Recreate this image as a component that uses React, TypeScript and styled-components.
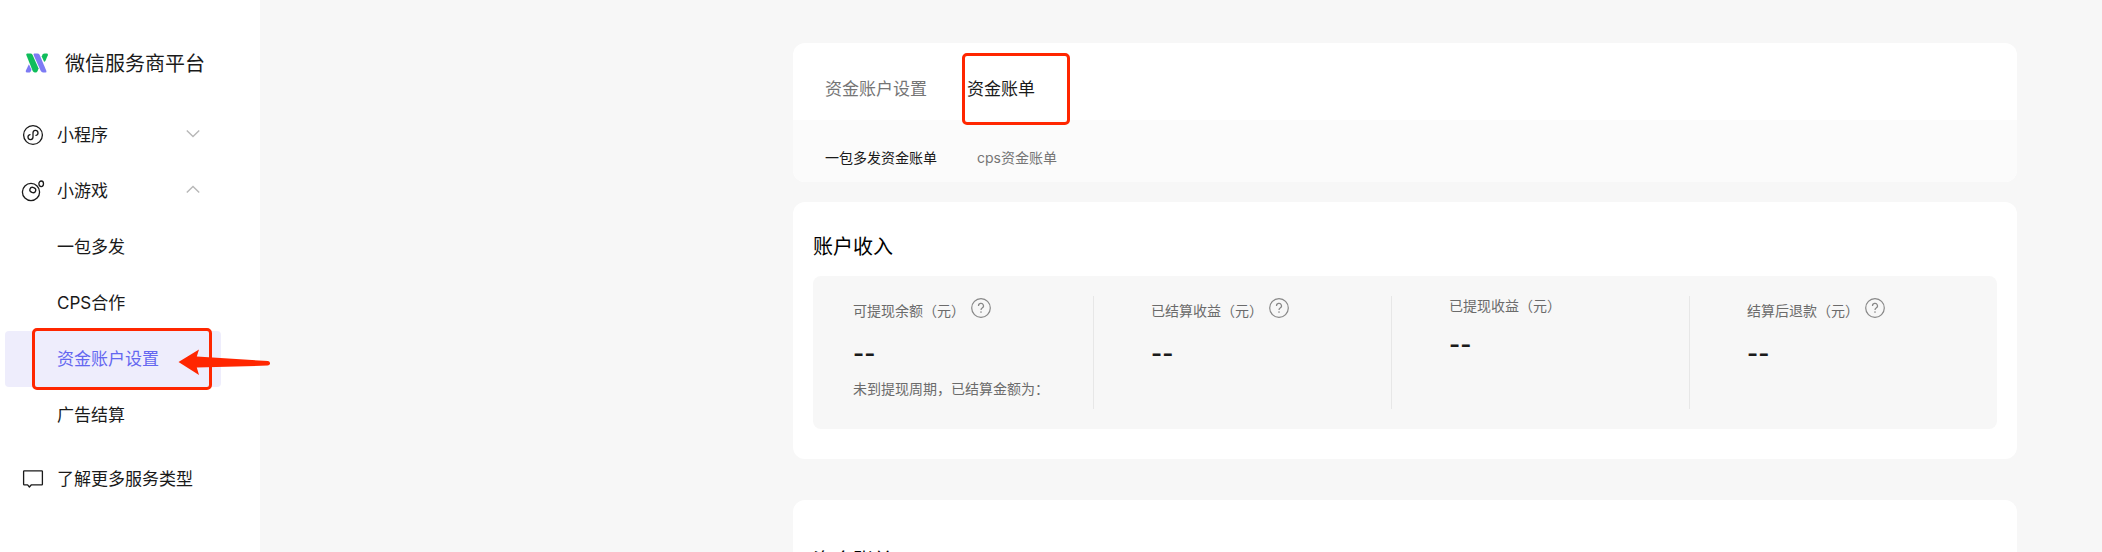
import React from "react";
import styled, { createGlobalStyle, css } from "styled-components";

const Global = createGlobalStyle`
  *, *::before, *::after { box-sizing: border-box; }
  body {
    margin: 0;
    background: #f7f7f7;
    color: #1a1a1a;
    font-family: Inter, "Noto Sans CJK SC", sans-serif;
  }
  h1, h2, p, ul, dl, dd, dt { margin: 0; padding: 0; }
  ul { list-style: none; }
  button { font: inherit; color: inherit; background: none; border: 0; padding: 0; cursor: pointer; }
  a { color: inherit; text-decoration: none; }
  svg { display: block; flex: none; }
`;

const Page = styled.div`
  display: flex;
  height: 100vh;
  overflow: hidden;
`;

const Sidebar = styled.aside`
  flex: none;
  width: 260px;
  padding: 48px 39px 0 5px;
  background: #fff;
`;

const Brand = styled.a`
  display: flex;
  align-items: center;
  gap: 16px;
  height: 30px;
  padding-left: 20px;
  margin-bottom: 29px;
`;

const BrandName = styled.h1`
  padding-top: 1px;
  font-size: 20px;
  line-height: 30px;
  font-weight: 400;
  white-space: nowrap;
`;

const rowStyle = css`
  display: flex;
  align-items: center;
  width: 100%;
  height: 56px;
  border-radius: 4px;
  font-size: 17px;
  line-height: 24px;
  text-align: left;
  white-space: nowrap;
`;

const MenuButton = styled.button`
  ${rowStyle}
  padding: 0 21px 0 16px;
`;

const MenuLabel = styled.span`
  flex: 1;
  margin-left: 12px;
`;

const SubItem = styled.li`
  position: relative;
`;

const SubLink = styled.a<{ $active?: boolean }>`
  ${rowStyle}
  padding-left: 52px;
  color: ${(p) => (p.$active ? "#6467f0" : "inherit")};
  background: ${(p) => (p.$active ? "#eeedfc" : "transparent")};
`;

const MoreLink = styled.a`
  ${rowStyle}
  margin-top: 8px;
  padding: 0 0 0 16px;
`;

const Marker = styled.span`
  position: absolute;
  border: 3px solid #ff2600;
  border-radius: 5px;
  pointer-events: none;
`;

const MenuMarker = styled(Marker)`
  inset: -3px 9px -3px 27px;
`;

const TabMarker = styled(Marker)`
  inset: -24px -35px -24px -5px;
`;

const Arrow = styled.svg`
  position: absolute;
  left: 173px;
  top: 17px;
`;

const Main = styled.main`
  flex: 1;
  min-width: 0;
  padding: 43px 85px 0;
`;

const Content = styled.div`
  max-width: 1224px;
  margin-left: auto;
`;

const Card = styled.section`
  background: #fff;
  border-radius: 12px;
`;

const TabBar = styled.nav`
  display: flex;
  align-items: center;
  gap: 40px;
  height: 77px;
  padding: 15px 32px 0;
`;

const SubTabBar = styled.nav`
  display: flex;
  align-items: center;
  gap: 40px;
  height: 62px;
  padding: 14px 32px 0;
  background: #fbfbfb;
  border-radius: 0 0 12px 12px;
`;

const Tab = styled.button<{ $active?: boolean }>`
  position: relative;
  font-size: 17px;
  line-height: 24px;
  color: ${(p) => (p.$active ? "#1a1a1a" : "#757575")};
`;

const SubTab = styled.button<{ $active?: boolean }>`
  font-size: 14px;
  line-height: 20px;
  color: ${(p) => (p.$active ? "#1a1a1a" : "#757575")};
`;

const IncomeCard = styled(Card)`
  margin-top: 20px;
  padding: 29px 20px 30px;
`;

const BillCard = styled(Card)`
  margin-top: 41px;
  padding: 45px 20px 30px;
`;

const CardTitle = styled.h2`
  font-size: 20px;
  line-height: 32px;
  font-weight: 400;
  color: #000;
`;

const Stats = styled.dl`
  display: grid;
  grid-template-columns: 281fr 298fr 298fr 307fr;
  margin-top: 13px;
  padding: 20px 0;
  border-radius: 8px;
  background: #f7f7f7;
`;

const Stat = styled.div`
  min-height: 113px;
  padding-left: 57px;
  border-right: 1px solid #e7e7e7;
  &:first-child { padding-left: 40px; }
  &:last-child { border-right: 0; }
`;

const StatLabel = styled.dt`
  display: flex;
  align-items: center;
  gap: 6px;
  font-size: 14px;
  line-height: 20px;
  color: #6b6b6b;
  white-space: nowrap;
`;

const HelpButton = styled.button`
  padding: 2px 0 7px;
`;

const StatValue = styled.dd`
  margin-top: 13px;
  font-size: 24px;
  line-height: 32px;
  font-weight: 600;
`;

const StatNote = styled.dd`
  margin-top: 9px;
  font-size: 14px;
  line-height: 20px;
  color: #6b6b6b;
  white-space: nowrap;
`;

const Logo = () => (
  <svg width="24" height="20" viewBox="0 0 24 20" aria-hidden="true">
    <path d="M3.9 11.2 L6.5 16.8 L5.7 18.4 Q5 19.6 3.6 19.6 H1.8 Q0.2 19.4 0.9 17.6 Z" fill="#7d7bf4" />
    <path d="M19 8.6 L16.7 3.4 L17.6 1.6 Q18.3 0.4 19.6 0.4 H22 Q23.4 0.6 22.8 2.2 L20.6 7.4 Q19.8 8.8 19 8.6 Z" fill="#0fbd5b" />
    <path d="M9.2 0.4 H12.4 Q13.8 0.4 14.6 1.8 L21.4 18 Q21.8 19.6 20.4 19.6 H18 Q16.6 19.4 15.8 18 L8.6 2 Q8.2 0.6 9.2 0.4 Z" fill="#7d7bf4" />
    <path d="M2.2 0.4 H5.4 Q6.8 0.4 7.5 1.8 L13.6 15.4 L12.6 18 Q11.9 19.6 10.6 19.6 H9.8 Q8.4 19.4 7.7 18 L1.3 2 Q0.9 0.6 2.2 0.4 Z" fill="#0fbd5b" />
  </svg>
);

const ProgramIcon = () => (
  <svg width="24" height="24" viewBox="0 0 24 24" fill="none" stroke="#1a1a1a" strokeWidth="1.3" strokeLinecap="round" aria-hidden="true">
    <circle cx="12" cy="12" r="9.4" />
    <path d="M9 11.6 A2.5 2.5 0 1 0 12 14 V10 A2.5 2.5 0 1 1 15 12.4" />
  </svg>
);

const GameIcon = () => (
  <svg width="24" height="24" viewBox="0 0 24 24" fill="none" stroke="#1a1a1a" strokeWidth="1.3" aria-hidden="true">
    <circle cx="10" cy="13" r="8.6" />
    <ellipse cx="11.8" cy="11" rx="3" ry="2.6" transform="rotate(20 11.8 11)" />
    <ellipse cx="20.2" cy="4.8" rx="2.3" ry="2.8" />
  </svg>
);

const ChatIcon = () => (
  <svg width="24" height="24" viewBox="0 0 24 24" fill="none" stroke="#1a1a1a" strokeWidth="1.3" strokeLinejoin="round" aria-hidden="true">
    <path d="M3.2 3.8 H20.8 Q21.4 3.8 21.4 4.4 V17.2 Q21.4 17.8 20.8 17.8 H10.4 L8.4 20 L6.6 17.8 H3.2 Q2.6 17.8 2.6 17.2 V4.4 Q2.6 3.8 3.2 3.8 Z" />
  </svg>
);

const Chevron = ({ up = false }: { up?: boolean }) => (
  <svg width="14" height="12" viewBox="0 0 14 12" fill="none" stroke="#b8b8b8" strokeWidth="1.4" aria-hidden="true">
    <path d={up ? "M0.8 7.6 L7 1.4 L13.2 7.6" : "M0.8 1.4 L7 7.6 L13.2 1.4"} />
  </svg>
);

const HelpIcon = () => (
  <svg width="20" height="20" viewBox="0 0 20 20" fill="none" stroke="#888" strokeWidth="1.2" aria-hidden="true">
    <circle cx="10" cy="10" r="9.3" />
    <path d="M7.5 8 A2.5 2.4 0 1 1 11.2 9.9 Q10 10.6 10 11.9" />
    <circle cx="10" cy="14.1" r="0.8" fill="#888" stroke="none" />
  </svg>
);

const subItems = ["一包多发", "CPS合作", "资金账户设置", "广告结算"];

const stats: { label: string; help?: boolean; note?: string }[] = [
  { label: "可提现余额（元）", help: true, note: "未到提现周期，已结算金额为：" },
  { label: "已结算收益（元）", help: true },
  { label: "已提现收益（元）" },
  { label: "结算后退款（元）", help: true },
];

export default function App() {
  return (
    <Page lang="zh-CN">
      <Global />
      <Sidebar>
        <Brand href="#">
          <Logo />
          <BrandName>微信服务商平台</BrandName>
        </Brand>
        <nav>
          <MenuButton aria-expanded={false}>
            <ProgramIcon />
            <MenuLabel>小程序</MenuLabel>
            <Chevron />
          </MenuButton>
          <MenuButton aria-expanded>
            <GameIcon />
            <MenuLabel>小游戏</MenuLabel>
            <Chevron up />
          </MenuButton>
          <ul>
            {subItems.map((item) => {
              const active = item === "资金账户设置";
              return (
                <SubItem key={item}>
                  <SubLink href="#" $active={active}>{item}</SubLink>
                  {active && (
                    <>
                      <MenuMarker />
                      <Arrow width="94" height="28" viewBox="0 0 94 28" aria-hidden="true">
                        <path d="M0.5 14 L21 1.5 L18.8 8.6 L90 13 Q92.4 13.6 92 15.8 Q91.6 17.6 89.6 17.6 L18.8 19.6 L21 27 Z" fill="#ff2600" />
                      </Arrow>
                    </>
                  )}
                </SubItem>
              );
            })}
          </ul>
          <MoreLink href="#">
            <ChatIcon />
            <MenuLabel>了解更多服务类型</MenuLabel>
          </MoreLink>
        </nav>
      </Sidebar>
      <Main>
        <Content>
          <Card>
            <TabBar>
              <Tab>资金账户设置</Tab>
              <Tab $active>
                资金账单
                <TabMarker />
              </Tab>
            </TabBar>
            <SubTabBar>
              <SubTab $active>一包多发资金账单</SubTab>
              <SubTab>cps资金账单</SubTab>
            </SubTabBar>
          </Card>
          <IncomeCard>
            <CardTitle>账户收入</CardTitle>
            <Stats>
              {stats.map((s) => (
                <Stat key={s.label}>
                  <StatLabel>
                    {s.label}
                    {s.help && (
                      <HelpButton aria-label={s.label}>
                        <HelpIcon />
                      </HelpButton>
                    )}
                  </StatLabel>
                  <StatValue>--</StatValue>
                  {s.note && <StatNote>{s.note}</StatNote>}
                </Stat>
              ))}
            </Stats>
          </IncomeCard>
          <BillCard>
            <CardTitle>资金账单</CardTitle>
          </BillCard>
        </Content>
      </Main>
    </Page>
  );
}
